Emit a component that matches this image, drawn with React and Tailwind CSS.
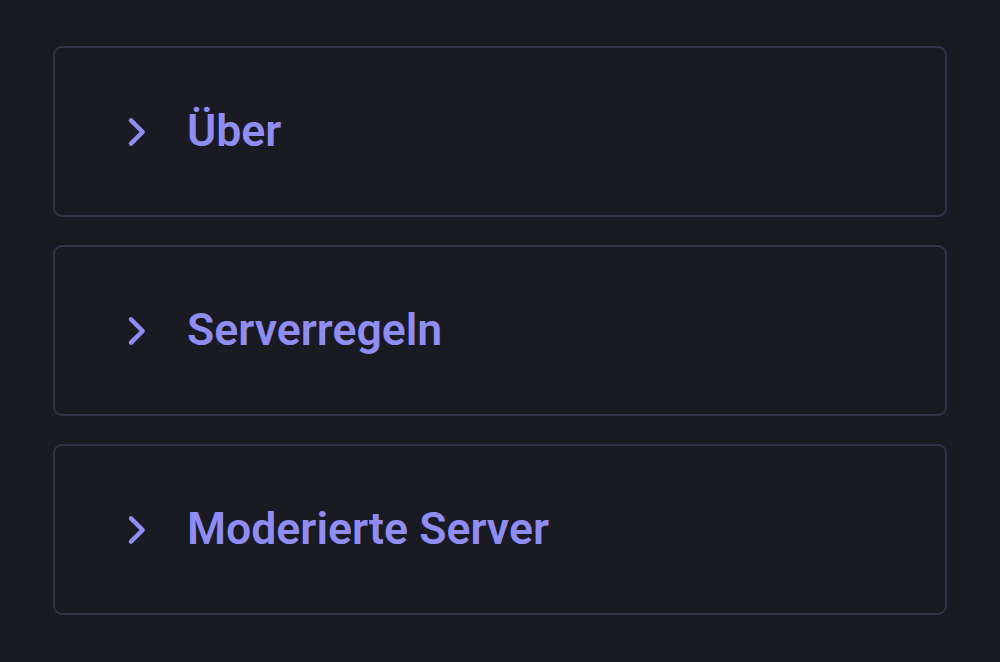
import React from "react";

const items = ["Über", "Serverregeln", "Moderierte Server"];

const Chevron = () => (
  <svg width="40" height="40" viewBox="0 0 24 24" fill="none" stroke="currentColor" strokeWidth="2.7" strokeLinecap="round" strokeLinejoin="round">
    <path d="M9 5l7 7-7 7" />
  </svg>
);

export default function App() {
  return (
    <div className="w-[1000px] h-[662px] bg-[#1a1a23] px-[53px] pt-[46px] flex flex-col gap-[28px]" style={{ fontFamily: "Roboto, 'Noto Sans', sans-serif" }}>
      {items.map((t) => (
        <div key={t} className="h-[171px] rounded-[9px] border-2 border-[#33334a] flex items-center pl-[61px] gap-[31px] text-[#8f8cf2]">
          <Chevron />
          <span className="text-[44.6px] font-semibold leading-none">{t}</span>
        </div>
      ))}
    </div>
  );
}
